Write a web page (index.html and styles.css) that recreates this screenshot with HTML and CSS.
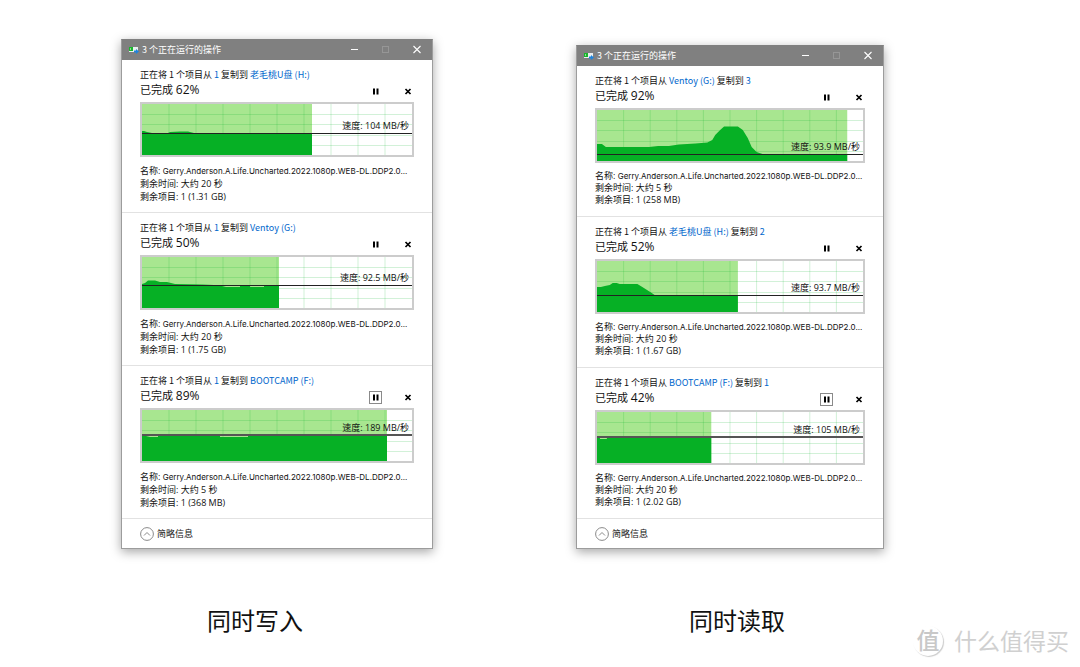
FILE: index.html
```html
<!DOCTYPE html>
<html lang="zh-CN">
<head>
<meta charset="utf-8">
<meta name="viewport" content="width=device-width, initial-scale=1">
<title>同时写入 / 同时读取</title>
<link rel="stylesheet" href="styles.css">
</head>
<body>
<svg class="defs" width="0" height="0" aria-hidden="true">
  <defs>
    <path id="grid" class="grid" d="M27 0V51M54 0V51M81 0V51M108 0V51M135 0V51M162 0V51M189 0V51M216 0V51M243 0V51M0 10.500H270M0 20.500H270M0 31.500H270M0 41.500H270"/>
    <g id="copy-icon">
      <rect x="1" y="2" width="9" height="5" fill="#e9eef0"/>
      <rect x="1" y="2" width="4" height="4" fill="#18b52c"/>
      <rect x="2" y="3" width="1" height="2" fill="#8be38f"/>
      <path d="M6 5.500h2V4l3 2.500L8 9V7.500H6z" fill="#1e83dc"/>
    </g>
    <path id="i-min" d="M1 4.500h7" fill="none" stroke="#fff"/>
    <rect id="i-max" x="1.500" y="1.500" width="6" height="6" fill="none" stroke="#969696"/>
    <path id="i-close" d="M1.500 1l7 7M8.500 1l-7 7" fill="none" stroke="#fff" stroke-width="1.100"/>
    <path id="i-pause" d="M4 3.500h2v6H4zM7.500 3.500h2v6h-2z" fill="#000"/>
    <path id="i-stop" d="M4.500 4l5 5M9.500 4l-5 5" fill="none" stroke="#000" stroke-width="1.700"/>
  </defs>
</svg>

<main class="comparison">
  <figure class="side side-write">
    <section class="window" aria-label="同时写入">
      <header class="titlebar">
        <svg class="app-icon" viewBox="0 0 12 10" aria-hidden="true"><use href="#copy-icon"/></svg>
        <h1 class="title">3 个正在运行的操作</h1>
        <button class="caption-button" aria-label="最小化"><svg viewBox="0 0 10 10"><use href="#i-min"/></svg></button>
        <button class="caption-button" aria-label="最大化" disabled><svg viewBox="0 0 10 10"><use href="#i-max"/></svg></button>
        <button class="caption-button" aria-label="关闭"><svg viewBox="0 0 10 10"><use href="#i-close"/></svg></button>
      </header>

      <article class="operation">
        <p class="route">正在将 1 个项目从 <a href="#">1</a> 复制到 <a href="#">老毛桃U盘 (H:)</a></p>
        <div class="status">
          <h2 class="percent">已完成 <span class="value">62%</span></h2>
          <button class="control" aria-label="暂停"><svg viewBox="0 0 13 13"><use href="#i-pause"/></svg></button>
          <button class="control" aria-label="取消"><svg viewBox="0 0 13 13"><use href="#i-stop"/></svg></button>
        </div>
        <div class="chart">
          <svg class="plot" viewBox="0 0 270 51" preserveAspectRatio="none" aria-hidden="true">
            <rect class="progress" width="170" height="51"/>
            <use href="#grid"/>
            <path class="speed-area" d="M0 51V27H2L5 28L10 29H26L28 28L38 27.500H46L52 29H60L62 30H66V29H80V30H112V29H122V30H126V29H155V30H170V51Z"/>
            <path class="speed-line" d="M0 29.500H270"/>
          </svg>
          <span class="speed" style="bottom:22px">速度: 104 MB/秒</span>
        </div>
        <ul class="details">
          <li>名称: <span class="file">Gerry.Anderson.A.Life.Uncharted.2022.1080p.WEB-DL.DDP2.0...</span></li>
          <li>剩余时间: 大约 20 秒</li>
          <li>剩余项目: 1 (1.31 GB)</li>
        </ul>
      </article>

      <article class="operation">
        <p class="route">正在将 1 个项目从 <a href="#">1</a> 复制到 <a href="#">Ventoy (G:)</a></p>
        <div class="status">
          <h2 class="percent">已完成 <span class="value">50%</span></h2>
          <button class="control" aria-label="暂停"><svg viewBox="0 0 13 13"><use href="#i-pause"/></svg></button>
          <button class="control" aria-label="取消"><svg viewBox="0 0 13 13"><use href="#i-stop"/></svg></button>
        </div>
        <div class="chart">
          <svg class="plot" viewBox="0 0 270 51" preserveAspectRatio="none" aria-hidden="true">
            <rect class="progress" width="137" height="51"/>
            <use href="#grid"/>
            <path class="speed-area" d="M0 51V27L3 26L6 23.500H13L18 25H25L33 27L60 27.500L72 28L80 29L84 30H98V29H108V30H122V29H137V51Z"/>
            <path class="speed-line" d="M0 28.500H270"/>
          </svg>
          <span class="speed" style="bottom:23px">速度: 92.5 MB/秒</span>
        </div>
        <ul class="details">
          <li>名称: <span class="file">Gerry.Anderson.A.Life.Uncharted.2022.1080p.WEB-DL.DDP2.0...</span></li>
          <li>剩余时间: 大约 20 秒</li>
          <li>剩余项目: 1 (1.75 GB)</li>
        </ul>
      </article>

      <article class="operation">
        <p class="route">正在将 1 个项目从 <a href="#">1</a> 复制到 <a href="#">BOOTCAMP (F:)</a></p>
        <div class="status">
          <h2 class="percent">已完成 <span class="value">89%</span></h2>
          <button class="control focused" aria-label="暂停"><svg viewBox="0 0 13 13"><use href="#i-pause"/></svg></button>
          <button class="control" aria-label="取消"><svg viewBox="0 0 13 13"><use href="#i-stop"/></svg></button>
        </div>
        <div class="chart">
          <svg class="plot" viewBox="0 0 270 51" preserveAspectRatio="none" aria-hidden="true">
            <rect class="progress" width="245" height="51"/>
            <use href="#grid"/>
            <path class="speed-area" d="M0 51V26H4L8 27H16V26H78V27H106V26H245V51Z"/>
            <path class="speed-line average" d="M0 25H270"/>
          </svg>
          <span class="speed" style="bottom:26px">速度: 189 MB/秒</span>
        </div>
        <ul class="details">
          <li>名称: <span class="file">Gerry.Anderson.A.Life.Uncharted.2022.1080p.WEB-DL.DDP2.0...</span></li>
          <li>剩余时间: 大约 5 秒</li>
          <li>剩余项目: 1 (368 MB)</li>
        </ul>
      </article>

      <footer class="window-footer">
        <button class="toggle"><svg viewBox="0 0 14 14" aria-hidden="true"><circle cx="7" cy="7" r="6.400"/><path d="M4 8.500L7 5.500L10 8.500"/></svg>简略信息</button>
      </footer>
    </section>
    <figcaption class="caption">同时写入</figcaption>
  </figure>

  <figure class="side side-read">
    <section class="window" aria-label="同时读取">
      <header class="titlebar">
        <svg class="app-icon" viewBox="0 0 12 10" aria-hidden="true"><use href="#copy-icon"/></svg>
        <h1 class="title">3 个正在运行的操作</h1>
        <button class="caption-button" aria-label="最小化"><svg viewBox="0 0 10 10"><use href="#i-min"/></svg></button>
        <button class="caption-button" aria-label="最大化" disabled><svg viewBox="0 0 10 10"><use href="#i-max"/></svg></button>
        <button class="caption-button" aria-label="关闭"><svg viewBox="0 0 10 10"><use href="#i-close"/></svg></button>
      </header>

      <article class="operation">
        <p class="route">正在将 1 个项目从 <a href="#">Ventoy (G:)</a> 复制到 <a href="#">3</a></p>
        <div class="status">
          <h2 class="percent">已完成 <span class="value">92%</span></h2>
          <button class="control" aria-label="暂停"><svg viewBox="0 0 13 13"><use href="#i-pause"/></svg></button>
          <button class="control" aria-label="取消"><svg viewBox="0 0 13 13"><use href="#i-stop"/></svg></button>
        </div>
        <div class="chart">
          <svg class="plot" viewBox="0 0 270 51" preserveAspectRatio="none" aria-hidden="true">
            <rect class="progress" width="254" height="51"/>
            <use href="#grid"/>
            <path class="speed-area" d="M0 51V34H5L9 37H53L62 36H73L83 34.500L100 33.500L112 32.500L117 30L120 25L125 20L129 16.500H143L148 20L153 28L157 37L162 42L168 44H254V51Z"/>
            <path class="speed-line" d="M0 44.500H270"/>
          </svg>
          <span class="speed" style="bottom:7px">速度: 93.9 MB/秒</span>
        </div>
        <ul class="details">
          <li>名称: <span class="file">Gerry.Anderson.A.Life.Uncharted.2022.1080p.WEB-DL.DDP2.0...</span></li>
          <li>剩余时间: 大约 5 秒</li>
          <li>剩余项目: 1 (258 MB)</li>
        </ul>
      </article>

      <article class="operation">
        <p class="route">正在将 1 个项目从 <a href="#">老毛桃U盘 (H:)</a> 复制到 <a href="#">2</a></p>
        <div class="status">
          <h2 class="percent">已完成 <span class="value">52%</span></h2>
          <button class="control" aria-label="暂停"><svg viewBox="0 0 13 13"><use href="#i-pause"/></svg></button>
          <button class="control" aria-label="取消"><svg viewBox="0 0 13 13"><use href="#i-stop"/></svg></button>
        </div>
        <div class="chart">
          <svg class="plot" viewBox="0 0 270 51" preserveAspectRatio="none" aria-hidden="true">
            <rect class="progress" width="143" height="51"/>
            <use href="#grid"/>
            <path class="speed-area" d="M0 51V26H4L8 25L13 24L16 22H20L23 23H41L46 26L54 31L60 35H143V51Z"/>
            <path class="speed-line" d="M0 34.500H270"/>
          </svg>
          <span class="speed" style="bottom:17px">速度: 93.7 MB/秒</span>
        </div>
        <ul class="details">
          <li>名称: <span class="file">Gerry.Anderson.A.Life.Uncharted.2022.1080p.WEB-DL.DDP2.0...</span></li>
          <li>剩余时间: 大约 20 秒</li>
          <li>剩余项目: 1 (1.67 GB)</li>
        </ul>
      </article>

      <article class="operation">
        <p class="route">正在将 1 个项目从 <a href="#">BOOTCAMP (F:)</a> 复制到 <a href="#">1</a></p>
        <div class="status">
          <h2 class="percent">已完成 <span class="value">42%</span></h2>
          <button class="control focused" aria-label="暂停"><svg viewBox="0 0 13 13"><use href="#i-pause"/></svg></button>
          <button class="control" aria-label="取消"><svg viewBox="0 0 13 13"><use href="#i-stop"/></svg></button>
        </div>
        <div class="chart">
          <svg class="plot" viewBox="0 0 270 51" preserveAspectRatio="none" aria-hidden="true">
            <rect class="progress" width="116" height="51"/>
            <use href="#grid"/>
            <path class="speed-area" d="M0 51V26H3V27H10V26H116V51Z"/>
            <path class="speed-line average" d="M0 25H270"/>
          </svg>
          <span class="speed" style="bottom:26px">速度: 105 MB/秒</span>
        </div>
        <ul class="details">
          <li>名称: <span class="file">Gerry.Anderson.A.Life.Uncharted.2022.1080p.WEB-DL.DDP2.0...</span></li>
          <li>剩余时间: 大约 20 秒</li>
          <li>剩余项目: 1 (2.02 GB)</li>
        </ul>
      </article>

      <footer class="window-footer">
        <button class="toggle"><svg viewBox="0 0 14 14" aria-hidden="true"><circle cx="7" cy="7" r="6.400"/><path d="M4 8.500L7 5.500L10 8.500"/></svg>简略信息</button>
      </footer>
    </section>
    <figcaption class="caption">同时读取</figcaption>
  </figure>
</main>

<div class="watermark"><span class="badge">值</span><span>什么值得买</span></div>
</body>
</html>
```

FILE: styles.css
```css
* {
  box-sizing: border-box;
}

body {
  margin: 0;
  min-height: 100vh;
  position: relative;
  background: #fff;
  color: #111;
  font-family: "Open Sans", "Noto Sans CJK SC", sans-serif;
  font-size: 9px;
}

h1, h2, p, ul, figure {
  margin: 0;
  padding: 0;
  font-size: inherit;
  font-weight: 400;
}

button {
  margin: 0;
  padding: 0;
  border: 0;
  background: none;
  color: inherit;
  font: inherit;
}

a {
  color: #0066cc;
  text-decoration: none;
}

.defs {
  position: absolute;
}

.comparison {
  display: grid;
  grid-template-columns: minmax(0, 312fr) minmax(0, 308fr);
  column-gap: 143px;
  align-items: end;
  padding: 39px 196px 0 121px;
}

.window {
  border: 1px solid #9c9c9c;
  border-top-color: #808080;
  background: #fff;
  box-shadow: 0 3px 10px rgba(0, 0, 0, 0.35);
}

.titlebar {
  display: flex;
  align-items: center;
  height: 20px;
  padding-left: 6px;
  background: #808080;
  color: #fff;
}

.app-icon {
  width: 12px;
  height: 10px;
  margin-right: 2px;
}

.title {
  flex: 1;
  line-height: 12px;
  padding-bottom: 1px;
  font-family: "Noto Sans CJK SC", sans-serif;
  white-space: nowrap;
}

.caption-button {
  display: grid;
  place-items: center;
  width: 31px;
  height: 20px;
}

.caption-button svg {
  width: 10px;
  height: 10px;
}

.operation {
  padding: 7px 18px 9px;
  border-bottom: 1px solid #e2e2e2;
}

.route {
  font-family: "Noto Sans CJK SC", sans-serif;
  line-height: 15px;
  white-space: nowrap;
}

.status {
  display: flex;
  align-items: flex-end;
  gap: 19px;
  height: 16px;
}

.percent {
  flex: 1;
  font-size: 11px;
  line-height: 16px;
}

.value {
  font-size: 12px;
  line-height: 14px;
}

.control {
  width: 13px;
  height: 13px;
}

.control svg {
  display: block;
  width: 13px;
  height: 13px;
}

.focused {
  outline: 1px solid #8a8a8a;
  outline-offset: -1px;
}

.chart {
  position: relative;
  height: 55px;
  margin: 4px 0 7px;
  border: 2px solid #ccc;
}

.plot {
  display: block;
  width: 100%;
  height: 100%;
}

.progress {
  fill: #a8e690;
}

.grid {
  fill: none;
  stroke: #06b025;
  stroke-opacity: 0.18;
  vector-effect: non-scaling-stroke;
}

.speed-area {
  fill: #06b025;
}

.speed-line {
  fill: none;
  stroke: #222;
  vector-effect: non-scaling-stroke;
}

.average {
  stroke: #555;
  stroke-width: 2;
}

.speed {
  position: absolute;
  right: 3px;
  line-height: 14px;
  white-space: nowrap;
}

.details {
  list-style: none;
  line-height: 13px;
}

.details li {
  white-space: nowrap;
}

.file {
  font-family: Inter, "Open Sans", sans-serif;
  font-size: 8px;
  line-height: 12px;
}

.side-read .operation {
  padding-bottom: 10px;
}

.side-read .details {
  line-height: 12px;
}

.window-footer {
  display: flex;
  align-items: center;
  height: 29px;
  padding: 0 18px;
}

.toggle {
  display: flex;
  align-items: center;
  gap: 3px;
}

.toggle svg {
  width: 14px;
  height: 14px;
  fill: none;
  stroke: #8a8a8a;
}

.caption {
  margin-top: 54px;
  font-size: 24px;
  line-height: 36px;
  text-align: center;
}

.side-write .caption {
  padding-right: 44px;
}

.side-read .caption {
  padding-left: 14px;
}

.watermark {
  position: absolute;
  right: 11px;
  bottom: 9px;
  display: flex;
  align-items: center;
  gap: 11px;
  color: #d0d0d0;
  font-size: 23px;
  line-height: 34px;
  white-space: nowrap;
}

.badge {
  flex: none;
  width: 30px;
  height: 30px;
  border-radius: 50%;
  box-shadow: 1px 1px 1px #ccc;
  color: #c8c8c8;
  font-size: 23px;
  font-weight: 500;
  line-height: 28px;
  text-align: center;
}
```
